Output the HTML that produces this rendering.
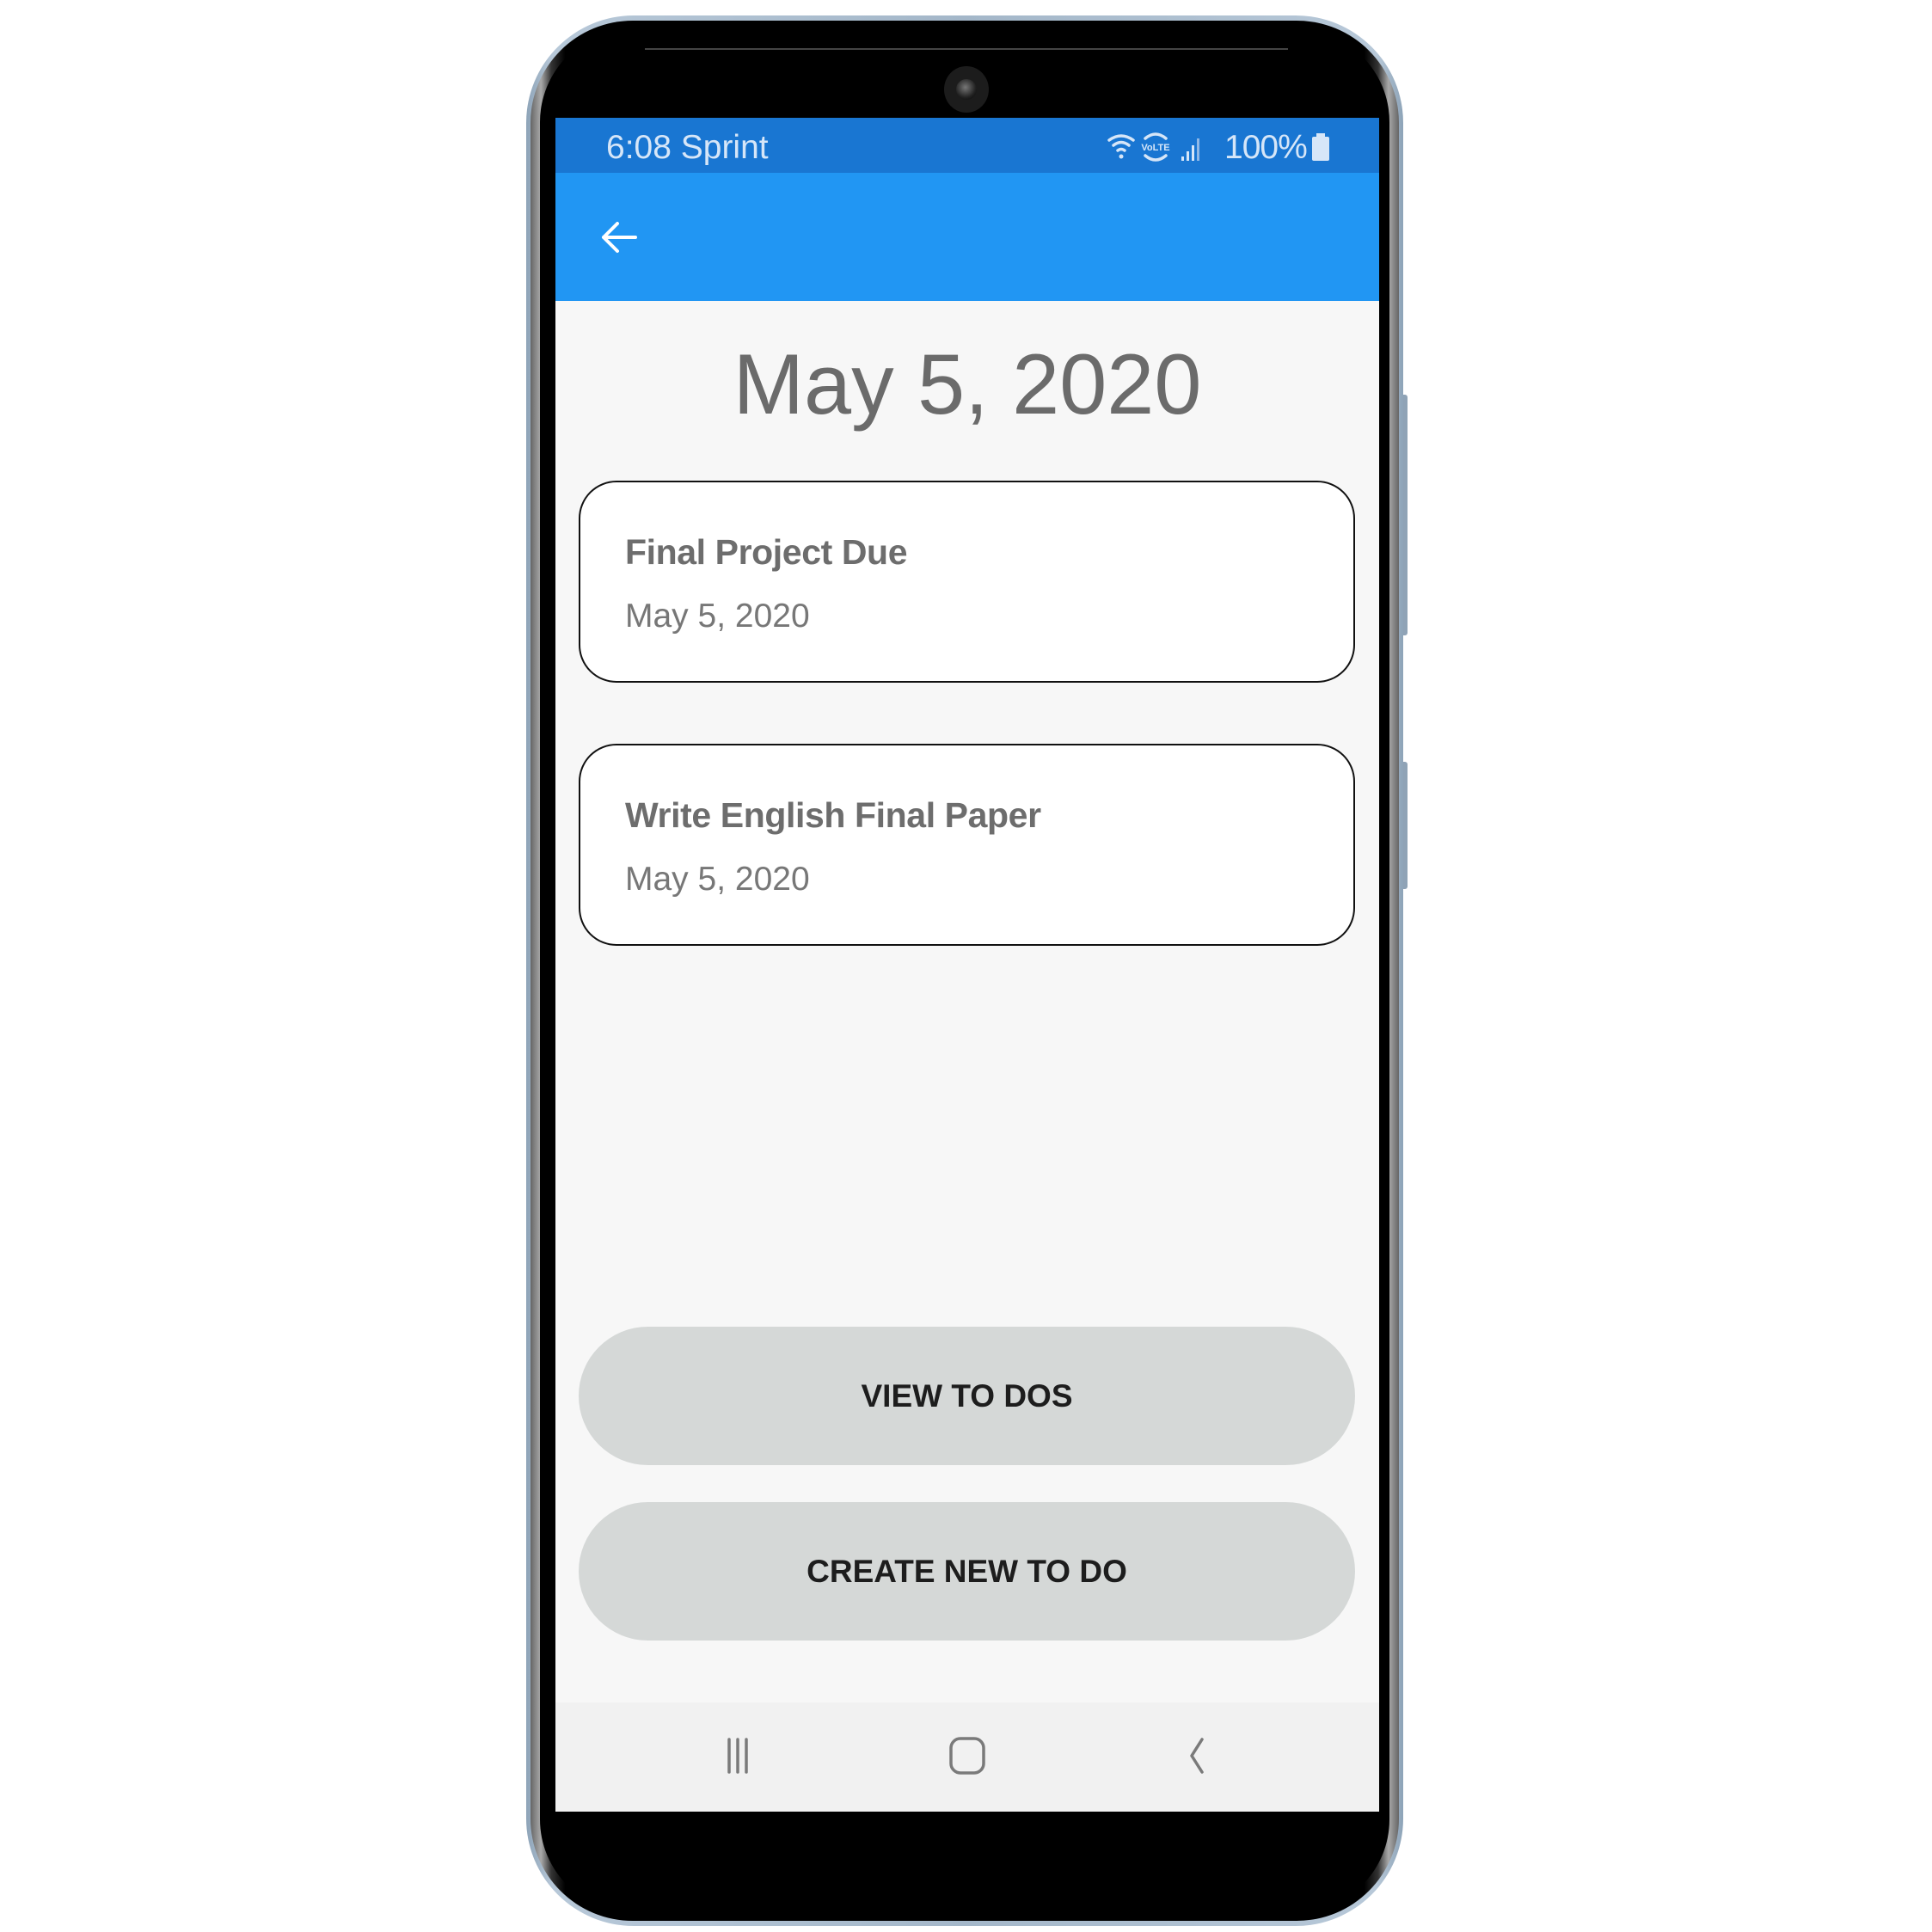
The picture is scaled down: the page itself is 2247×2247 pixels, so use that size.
<!DOCTYPE html>
<html><head><meta charset="utf-8"><style>
*{margin:0;padding:0;box-sizing:border-box}
body{width:2247px;height:2247px;background:#fff;position:relative;overflow:hidden;font-family:"Liberation Sans",sans-serif}
.abs{position:absolute}
.outer{left:612px;top:18px;width:1020px;height:2222px;border-radius:125px;background:linear-gradient(90deg,#8ea4b8,#b7c8d8 3%,#a4b7c9 50%,#b7c8d8 97%,#8ea4b8)}
.mid{left:617px;top:24px;width:1010px;height:2210px;border-radius:119px;background:linear-gradient(90deg,#666,#aaa 1.2%,#333 2.4%,#000 4%,#000 96%,#333 97.6%,#aaa 98.8%,#666)}
.inner{left:628px;top:34px;width:988px;height:2190px;border-radius:108px;background:#000}
.screen{left:646px;top:137px;width:958px;height:1970px;background:#f7f7f7;overflow:hidden}
.sb{left:0;top:0;width:100%;height:64px;background:#1976d2;color:#d6e6f8;font-size:39px}
.tb{left:0;top:64px;width:100%;height:149px;background:#2196f3}
.card{left:27px;width:903px;height:235px;background:#fff;border:2.5px solid #111;border-radius:44px}
.ct{position:absolute;left:52px;font-weight:bold;font-size:41px;letter-spacing:-0.4px;color:#6d6d6d}
.cd{position:absolute;left:52px;font-size:39px;color:#777}
.btn{left:27px;width:903px;height:161px;background:#d5d8d7;border-radius:81px;text-align:center;line-height:161px;font-size:37px;color:#1d1d1d;font-weight:bold;letter-spacing:0px}
.nav{left:0;top:1843px;width:100%;height:127px;background:#f1f1f1}
</style></head><body>
<div class="abs" style="left:1628px;top:459px;width:9px;height:280px;background:#8fa3b6;border-radius:3px"></div>
<div class="abs" style="left:1628px;top:886px;width:9px;height:148px;background:#8fa3b6;border-radius:3px"></div>
<div class="abs outer"></div>
<div class="abs mid"></div>
<div class="abs inner"></div>
<div class="abs" style="left:750px;top:56px;width:748px;height:2px;background:#444"></div>
<div class="abs" style="left:1098px;top:77px;width:52px;height:54px;border-radius:50%;background:#1c1c1c"></div>
<div class="abs" style="left:1112px;top:92px;width:24px;height:24px;border-radius:50%;background:radial-gradient(circle at 45% 40%,#777,#222 60%,#000)"></div>
<div class="abs screen">
 <div class="abs sb">
  <div class="abs" style="left:59px;top:13px">6:08 Sprint</div>
  <svg class="abs" style="left:640px;top:14px" width="270" height="42" viewBox="0 0 270 42" fill="none" stroke="#d6e6f8" stroke-width="3.5" stroke-linecap="round">
   <path d="M4 12 Q18 2 32 12"/><path d="M9 18 Q18 11 27 18"/><path d="M14 24 Q18 21 22 24"/><circle cx="18" cy="31" r="2.5" fill="#d6e6f8" stroke="none"/>
   <path d="M46 10 Q58 0 70 10"/><path d="M46 30 Q58 40 70 30"/>
   <text x="58" y="24" font-size="11" font-weight="bold" fill="#d6e6f8" stroke="none" text-anchor="middle" font-family="Liberation Sans">VoLTE</text>
   <rect x="88" y="31" width="3" height="5" fill="#d6e6f8" stroke="none"/><rect x="94" y="25" width="3" height="11" fill="#d6e6f8" stroke="none"/><rect x="100" y="18" width="3" height="18" fill="#d6e6f8" stroke="none"/><rect x="106" y="10" width="3" height="26" fill="#90b8e6" stroke="none"/>
  </svg>
  <div class="abs" style="left:778px;top:13px;letter-spacing:-1px">100%</div>
  <div class="abs" style="left:880px;top:22px;width:20px;height:28px;background:#d6e6f8;border-radius:2px"></div>
  <div class="abs" style="left:885px;top:18px;width:10px;height:5px;background:#d6e6f8"></div>
 </div>
 <div class="abs tb">
  <svg class="abs" style="left:50px;top:51px" width="48" height="48" viewBox="0 0 48 48" fill="none" stroke="#fff" stroke-width="4" stroke-linecap="round" stroke-linejoin="round"><path d="M43 24H6M22 8L6 24l16 16"/></svg>
 </div>
 <div class="abs" style="left:0;top:250px;width:100%;text-align:center;font-size:99px;color:#6b6b6b;line-height:120px">May 5, 2020</div>
 <div class="abs card" style="top:422px"><div class="ct" style="top:58px">Final Project Due</div><div class="cd" style="top:134px">May 5, 2020</div></div>
 <div class="abs card" style="top:728px"><div class="ct" style="top:58px">Write English Final Paper</div><div class="cd" style="top:134px">May 5, 2020</div></div>
 <div class="abs btn" style="top:1406px">VIEW TO DOS</div>
 <div class="abs btn" style="top:1610px">CREATE NEW TO DO</div>
 <div class="abs nav">
  <svg class="abs" style="left:184px;top:37px" width="60" height="50" viewBox="0 0 60 50" stroke="#7a7a7a" stroke-width="3.5" stroke-linecap="round" fill="none"><path d="M18 6v38M28 6v38M38 6v38"/></svg>
  <svg class="abs" style="left:449px;top:37px" width="60" height="50" viewBox="0 0 60 50" stroke="#7a7a7a" stroke-width="3.5" fill="none"><rect x="11" y="5" width="38" height="40" rx="11"/></svg>
  <svg class="abs" style="left:714px;top:37px" width="60" height="50" viewBox="0 0 60 50" stroke="#7a7a7a" stroke-width="3.5" stroke-linecap="round" stroke-linejoin="round" fill="none"><path d="M38 6L26 25l12 19"/></svg>
 </div>
</div>
</body></html>
